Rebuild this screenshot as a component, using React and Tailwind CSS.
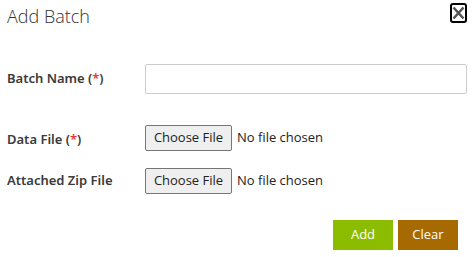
import React from "react";

function FileField() {
  return (
    <div className="flex items-center gap-[5px]">
      <button className="h-[26px] w-[87px] rounded-[2px] border border-[#767676] bg-[#efefef] text-[13px] text-[#222]">
        Choose File
      </button>
      <span className="text-[13px] text-[#222]">No file chosen</span>
    </div>
  );
}

function Label({ children }) {
  return (
    <label
      className="text-[13px] font-semibold text-[#3a3a3a]"
      style={{ fontFamily: '"Segoe UI", "Noto Sans", "Open Sans", sans-serif' }}
    >
      {children}
    </label>
  );
}

export default function App() {
  return (
    <div
      className="h-[257px] w-[475px] bg-white text-[#333]"
      style={{ fontFamily: '"Segoe UI", "Open Sans", "Noto Sans", sans-serif' }}
    >
      {/* Header */}
      <div className="flex items-start justify-between pl-[7px] pr-[8px] pt-[3px]">
        <h1 className="text-[18px] font-light leading-[26px] text-[#333]">Add Batch</h1>
        <button className="flex h-[20px] w-[17px] items-center justify-center rounded-[3px] border-2 border-black">
          <svg width="13" height="14" viewBox="0 0 13 14">
            <path d="M1.5 1.5 L11.5 12.5 M11.5 1.5 L1.5 12.5" stroke="#555" strokeWidth="2.6" strokeLinecap="butt" />
          </svg>
        </button>
      </div>

      {/* Form */}
      <div className="mt-[35px] grid grid-cols-[138px_322px] items-center gap-y-[17px] pl-[7px]">
        <Label>
          Batch Name (<span className="text-[#e53935]">*</span>)
        </Label>
        <input className="h-[30px] w-[322px] rounded-[2px] border border-[#cccccc] bg-white" />

        <div className="mt-[14px]">
          <Label>
            Data File (<span className="text-[#e53935]">*</span>)
          </Label>
        </div>
        <div className="mt-[14px]">
          <FileField />
        </div>

        <Label>Attached Zip File</Label>
        <FileField />
      </div>

      {/* Actions */}
      <div className="mt-[26px] flex justify-end gap-[5px] pr-[17px]">
        <button className="h-[30px] w-[60px] bg-[#8cbc00] text-[13px] text-white">Add</button>
        <button className="h-[30px] w-[60px] bg-[#a66a00] text-[13px] text-white">Clear</button>
      </div>
    </div>
  );
}
